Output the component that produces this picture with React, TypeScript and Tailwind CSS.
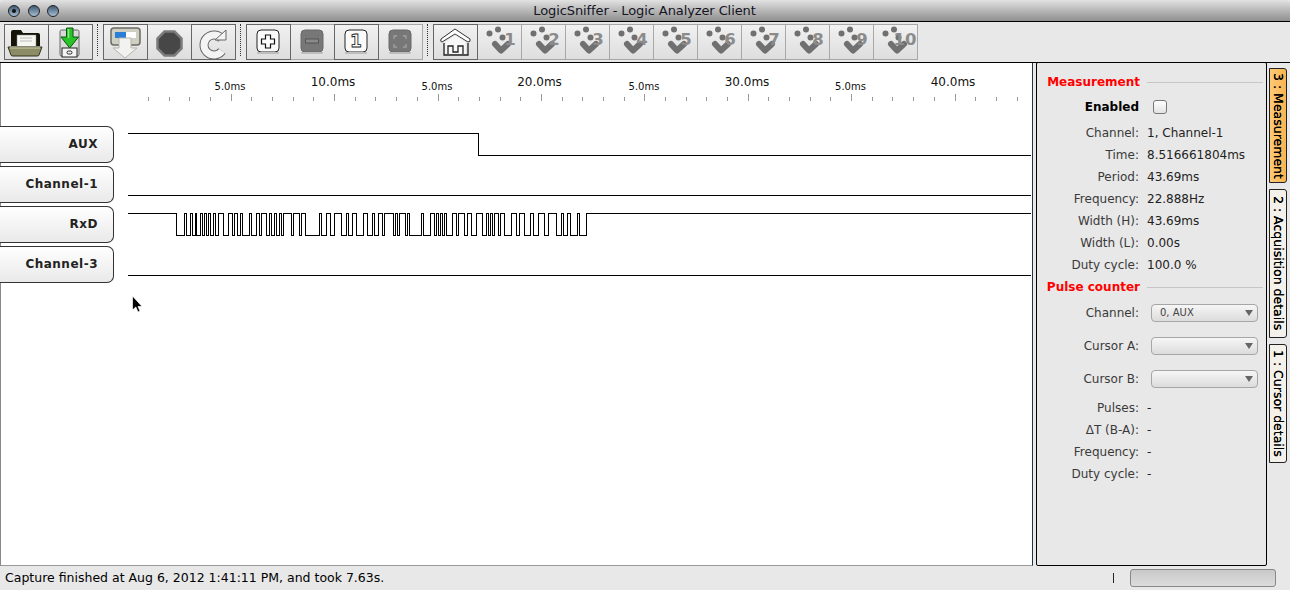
import React from 'react';

const font = { fontFamily: '"DejaVu Sans", sans-serif' };

// RxD edges, alternating fall / rise, starting high
const rxdEdges = [
  177, 185, 187, 191, 193, 196, 197, 201, 203, 205, 207, 209, 211, 214, 216, 219, 224, 229, 233, 235, 238, 241,
  243, 250, 252, 257, 260, 262, 267, 270, 272, 275, 277, 280, 282, 284, 292, 294, 300, 302, 306, 320, 322, 327, 331, 335,
  342, 347, 349, 353, 357, 364, 368, 373, 375, 379, 383, 385, 394, 396, 398, 400, 406, 408, 410, 422, 424, 431, 435, 437,
  439, 441, 443, 445, 447, 453, 457, 459, 465, 468, 472, 477, 483, 487, 489, 491, 493, 495, 499, 501,
  505, 512, 517, 520, 525, 531, 534, 539, 545, 549, 557, 562, 564, 568, 571, 578, 580, 587,
];

const rxdPath = () => {
  let d = 'M128 213.5';
  let high = true;
  rxdEdges.forEach((x) => {
    high = !high;
    d += ` H${x - 0.5} V${high ? 213.5 : 235.5}`;
  });
  return d + ' H1031';
};

const ticks = Array.from({ length: 43 }, (_, i) => i);

const rulerLabels = [
  { x: 230, y: 90, big: false, t: '5.0ms' },
  { x: 333, y: 86, big: true, t: '10.0ms' },
  { x: 437, y: 90, big: false, t: '5.0ms' },
  { x: 539.5, y: 86, big: true, t: '20.0ms' },
  { x: 644, y: 90, big: false, t: '5.0ms' },
  { x: 747, y: 86, big: true, t: '30.0ms' },
  { x: 850.5, y: 90, big: false, t: '5.0ms' },
  { x: 953, y: 86, big: true, t: '40.0ms' },
];

const Icon: React.FC<{ children: React.ReactNode; off?: boolean }> = ({ children, off }) => (
  <div
    className={`w-[45px] h-[36px] shrink-0 border bg-gradient-to-b from-[#f1f1f1] to-[#dedede] -ml-px first:ml-0 ${
      off ? 'border-[#a8a8a8]' : 'border-[#666] relative z-10'
    }`}
  >
    <svg className="block" width="43" height="34" viewBox="1 1 43 34">{children}</svg>
  </div>
);

const Sep = () => <div className="w-0 h-[32px] ml-[4px] mr-[6px] border-l border-dotted border-[#333]" />;

const Folder = () => (
  <>
    <path d="M7 12 L7 8 Q7 6 9 6 L17 6 L19 9 L34 9 Q36 9 36 11 L36 22 L7 22Z" fill="#141408" />
    <rect x="13" y="11" width="19" height="12" fill="#f6f6f0" stroke="#888" strokeWidth="0.5" />
    <path d="M16 14 H28 M16 17 H28" stroke="#bbb" strokeWidth="1" />
    <path d="M4 23 H38 L35 31 Q35 32 33 32 H9 Q7 32 7 31Z" fill="#8c8c66" stroke="#33331f" strokeWidth="1" />
    <path d="M6 24 H36" stroke="#b9b992" strokeWidth="1.5" />
  </>
);

const Download = () => (
  <>
    <rect x="12" y="6" width="19" height="26" rx="1.5" fill="#d9d9d9" stroke="#666" />
    <rect x="14" y="24" width="15" height="9" fill="#f4f4f4" stroke="#222" />
    <rect x="19" y="27" width="5" height="3" rx="1.5" fill="none" stroke="#222" />
    <path d="M18.5 4 H25 V13 H30.5 L21.7 24 L13 13 H18.5Z" fill="#27c327" stroke="#0b560b" strokeWidth="1" />
    <path d="M20.5 5 V14" stroke="#8be88b" strokeWidth="1.5" />
  </>
);

const Capture = () => (
  <>
    <rect x="8" y="4" width="29" height="17" rx="3" fill="#cfcfc4" stroke="#6b6b60" strokeWidth="1.5" />
    <rect x="12" y="8" width="21" height="6" fill="#fff" />
    <rect x="12" y="8" width="11" height="6" fill="#2a7fd6" />
    <path d="M16 14 H28 V24 H34 L22 34 L10 24 H16Z" fill="#f2f2f0" stroke="#b5b5b0" strokeWidth="1" />
  </>
);

const Stop = () => (
  <path d="M17 8 H27 L34 15 V25 L27 32 H17 L10 25 V15Z" transform="translate(0.5 -0.5)" fill="#474747" stroke="#7b7b7b" strokeWidth="2.5" />
);

const Refresh = () => (
  <>
    <path d="M31 15 A10 10 0 1 0 31 27" fill="none" stroke="#666" strokeWidth="9" />
    <path d="M31 15 A10 10 0 1 0 31 27" fill="none" stroke="#f4f4f4" strokeWidth="7" />
    <path d="M24 16 L35 16 L35 6 Z" fill="#f4f4f4" stroke="#666" strokeWidth="1" />
  </>
);

const Square: React.FC<{ dark?: boolean; children: React.ReactNode }> = ({ dark, children }) => (
  <>
    <rect x="11" y="6" width="22" height="22" rx="4" fill={dark ? '#777' : '#fafafa'} stroke={dark ? '#6a6a6a' : '#222'} />
    <rect x="11" y="28" width="22" height="2" rx="1" fill="#bdbdbd" />
    {children}
  </>
);

const Home = () => (
  <>
    <path d="M8 15 L22 5 L37 15 Q38 18 35 18 L22 10 L9 18 Q7 18 8 15Z" fill="#fff" stroke="#333" strokeWidth="1" />
    <path d="M12 18 L22 11 L33 18 V30 H12Z" fill="#f7f7f7" stroke="#ddd" strokeWidth="0.5" />
    <path d="M11 19 V31 H35 V19 M15 30 V22 H20 V28 H25 V22 H30 V30" fill="none" stroke="#222" strokeWidth="1.3" />
  </>
);

const Bookmark: React.FC<{ n: number }> = ({ n }) => (
  <>
    <circle cx="12.5" cy="9.5" r="3" fill="#707070" />
    <circle cx="21" cy="5.5" r="3" fill="#707070" />
    <circle cx="25.5" cy="13.5" r="3" fill="#707070" />
    <path d="M18 20 L24 26.5 L31 20" fill="none" stroke="#707070" strokeWidth="6" strokeLinecap="round" strokeLinejoin="round" />
    <text x={n === 10 ? 32 : 33} y="21" textAnchor="middle" fontSize="16.5" fontWeight="700" fill="#8b8b8b" style={font}>
      {n}
    </text>
  </>
);

const Row: React.FC<{ label: string; value: string }> = ({ label, value }) => (
  <div className="grid grid-cols-[102px_1fr] gap-x-[8px] h-[22px] items-center text-[12px] text-[#222]">
    <span className="text-right text-[#3a3a3a]">{label}</span>
    <span>{value}</span>
  </div>
);

const Heading: React.FC<{ label: string; className?: string }> = ({ label, className }) => (
  <div className={`grid grid-cols-[103px_1fr] gap-x-[7px] items-center ${className ?? ''}`}>
    <span className="text-right text-[12px] font-bold text-[#f00]">{label}</span>
    <div className="h-px bg-[#c6c6c6] mr-[3px]" />
  </div>
);

const SelectRow: React.FC<{ label: string; value?: string; className?: string }> = ({ label, value, className }) => (
  <div className={`grid grid-cols-[102px_1fr] gap-x-[8px] items-center text-[12px] ${className ?? ''}`}>
    <span className="text-right text-[#3a3a3a]">{label}</span>
    <div className="ml-[4px] w-[107px] h-[18px] rounded-[4px] border border-[#a6a6a6] bg-gradient-to-b from-[#f6f6f6] to-[#dcdcdc] flex items-center justify-between pl-[8px] pr-[4px] pb-[1px] text-[10px] text-[#444]">
      <span>{value}</span>
      <span className="w-0 h-0 border-x-[4px] border-x-transparent border-t-[6px] border-t-[#666]" />
    </div>
  </div>
);

const Tab: React.FC<{ label: string; active?: boolean; className: string }> = ({ label, active, className }) => (
  <div
    className={`w-[18px] border border-[#222] rounded-r-[3px] flex justify-center items-center text-[12.5px] text-black [writing-mode:vertical-rl] [text-shadow:0_0_0.6px_#000] ${className} ${
      active ? 'bg-gradient-to-r from-[#fcc877] to-[#f9b54f]' : 'bg-[#f4f0ea]'
    }`}
  >
    {label}
  </div>
);

const Light: React.FC<{ dot?: boolean }> = ({ dot }) => (
  <div className="w-[12px] h-[12px] rounded-full border border-[#222] bg-gradient-to-b from-[#3f5a73] to-[#a8c0d4] flex items-center justify-center">
    {dot && <div className="w-[4px] h-[4px] rounded-full bg-[#111]" />}
  </div>
);

const Label: React.FC<{ name: string }> = ({ name }) => (
  <div className="h-[37px] w-[114px] rounded-r-[7px] border border-l-0 border-[#333] bg-gradient-to-b from-white to-[#e9e9e9] flex items-center justify-end pr-[15px] pb-[2px] text-[12px] font-bold tracking-[0.5px] text-[#222]">
    {name}
  </div>
);

export default function App() {
  return (
    <div className="relative w-[1290px] h-[590px] overflow-hidden flex flex-col bg-[#e8e8e8]" style={font}>
      {/* Title bar */}
      <div className="h-[22px] shrink-0 relative flex items-center justify-center border-b border-black bg-gradient-to-b from-[#e2e2e2] to-[#8f8f8f] rounded-t-[4px]">
        <div className="absolute left-[8px] top-[5px] flex gap-[7.5px]">
          <Light dot />
          <Light />
          <Light />
        </div>
        <span className="text-[13px] tracking-[-0.1px] text-[#14141f] ml-[-1px]">LogicSniffer - Logic Analyzer Client</span>
      </div>

      {/* Toolbar */}
      <div className="h-[41px] shrink-0 flex items-start pt-[2px] pl-[4px] border-b border-black bg-[#e8e8e8]">
        <Icon><Folder /></Icon>
        <Icon><Download /></Icon>
        <Sep />
        <Icon><Capture /></Icon>
        <Icon off><Stop /></Icon>
        <Icon><Refresh /></Icon>
        <Sep />
        <Icon>
          <Square>
            <path d="M19.5 11 H24.5 V15 H28.5 V20 H24.5 V24 H19.5 V20 H15.5 V15 H19.5Z" fill="#fff" stroke="#111" strokeWidth="1.2" />
          </Square>
        </Icon>
        <Icon off>
          <Square dark>
            <rect x="15.5" y="15" width="13" height="4" fill="#8a8a8a" stroke="#555" />
          </Square>
        </Icon>
        <Icon>
          <Square>
            <text x="22" y="23" textAnchor="middle" fontSize="17" fontWeight="700" fill="#fff" stroke="#111" strokeWidth="0.8" style={font}>
              1
            </text>
          </Square>
        </Icon>
        <Icon off>
          <Square dark>
            <path d="M16 15 V12 H19 M25 12 H28 V15 M28 20 V23 H25 M19 23 H16 V20" fill="none" stroke="#a0a0a0" strokeWidth="1.3" />
          </Square>
        </Icon>
        <Sep />
        <Icon><Home /></Icon>
        {[1, 2, 3, 4, 5, 6, 7, 8, 9, 10].map((n) => (
          <Icon key={n} off>
            <Bookmark n={n} />
          </Icon>
        ))}
      </div>

      {/* Main area */}
      <div className="h-[503px] shrink-0 flex items-start -mt-px">
        <div className="w-[1033px] h-[503px] mt-px shrink-0 bg-white border-l border-l-[#888] border-r border-r-[#1d3650] border-b border-b-[#999] relative">
          <svg className="block -ml-px" width="1032" height="63" viewBox="0 63 1032 63">
            {ticks.map((i) => {
              const x = Math.round(148 + i * 20.68) + 0.5;
              const major = (i - 4) % 5 === 0;
              return <line key={i} x1={x} x2={x} y1={major ? 94 : 97} y2={101} stroke="#999" />;
            })}
            {rulerLabels.map((l) => (
              <text key={l.x} x={l.x} y={l.y} textAnchor="middle" fontSize={l.big ? 12 : 10} fill="#111" style={font}>
                {l.t}
              </text>
            ))}
          </svg>
          <div className="flex -ml-px">
            <div className="w-[128px] shrink-0 flex flex-col gap-[3px]">
              <Label name="AUX" />
              <Label name="Channel-1" />
              <Label name="RxD" />
              <Label name="Channel-3" />
            </div>
            <svg className="block" width="903" height="160" viewBox="128 126 903 160" shapeRendering="crispEdges">
              <g fill="none" stroke="#000" strokeWidth="1">
                <path d="M128 133.5 H478.5 V155.5 H1031" />
                <path d="M128 195.5 H1031" />
                <path d={rxdPath()} />
                <path d="M128 275.5 H1031" />
              </g>
            </svg>
          </div>
          {/* mouse pointer */}
          <svg className="absolute left-[130px] top-[232px]" width="14" height="20" viewBox="0 0 14 20">
            <path d="M1.5 1 V15 L4.8 12 L7 17 L9 16 L7 11.5 L11 11.5Z" fill="#000" stroke="#fff" strokeWidth="0.7" />
          </svg>
        </div>

        {/* Side panel */}
        <div className="w-[231px] h-[504px] ml-[3px] shrink-0 border border-black rounded-[2px] bg-[#e8e8e8]">
          <Heading label="Measurement" className="mt-[10px] h-[16px]" />
          <div className="grid grid-cols-[102px_1fr] gap-x-[8px] h-[22px] items-center mt-[7px] text-[12px]">
            <span className="text-right font-bold text-black">Enabled</span>
            <span className="ml-[6px] w-[14px] h-[14px] rounded-[3px] border border-[#777] bg-gradient-to-b from-white to-[#e2e2e2]" />
          </div>
          <div className="mt-[4px]">
            <Row label="Channel:" value="1, Channel-1" />
            <Row label="Time:" value="8.516661804ms" />
            <Row label="Period:" value="43.69ms" />
            <Row label="Frequency:" value="22.888Hz" />
            <Row label="Width (H):" value="43.69ms" />
            <Row label="Width (L):" value="0.00s" />
            <Row label="Duty cycle:" value="100.0 %" />
          </div>
          <Heading label="Pulse counter" className="h-[22px]" />
          <SelectRow label="Channel:" value="0, AUX" className="mt-[6px]" />
          <SelectRow label="Cursor A:" className="mt-[15px]" />
          <SelectRow label="Cursor B:" className="mt-[15px]" />
          <div className="mt-[9px]">
            <Row label="Pulses:" value="-" />
            <Row label="ΔT (B-A):" value="-" />
            <Row label="Frequency:" value="-" />
            <Row label="Duty cycle:" value="-" />
          </div>
        </div>

        {/* Vertical tabs */}
        <div className="ml-[2px] mt-[6px] flex flex-col gap-[6px] shrink-0">
          <Tab label="3 : Measurement" active className="h-[115px]" />
          <Tab label="2 : Acquisition details" className="h-[149px]" />
          <Tab label="1 : Cursor details" className="h-[119px]" />
        </div>
      </div>

      {/* Status bar */}
      <div className="flex-1 flex items-center pl-[5px] pr-[14px] pt-[1px] text-[12.5px] text-black">
        <span>Capture finished at Aug 6, 2012 1:41:11 PM, and took 7.63s.</span>
        <div className="ml-auto w-px h-[10px] bg-[#222] mr-[16px]" />
        <div className="w-[146px] h-[18px] rounded-[3px] border border-[#888] bg-gradient-to-b from-[#c9c9c9] to-[#dcdcdc]" />
      </div>
    </div>
  );
}
